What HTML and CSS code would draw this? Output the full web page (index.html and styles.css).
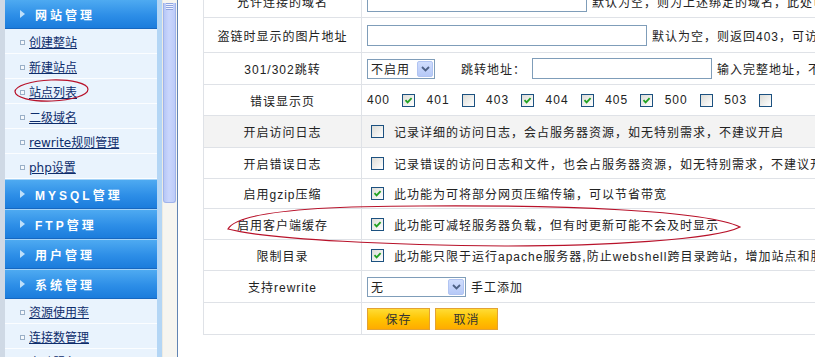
FILE: index.html
```html
<!DOCTYPE html>
<html lang="zh-CN">
<head>
<meta charset="utf-8">
<title>站点设置</title>
<link rel="stylesheet" href="styles.css">
</head>
<body>
<div class="page">
  <aside class="left">
    <nav class="menu">
      <div class="hd first"><i class="tri"></i><span>网站管理</span></div>
      <a class="it" href="#"><i class="bl"></i><span>创建整站</span></a>
      <a class="it" href="#"><i class="bl"></i><span>新建站点</span></a>
      <a class="it" href="#"><i class="bl"></i><span>站点列表</span></a>
      <a class="it" href="#"><i class="bl"></i><span>二级域名</span></a>
      <a class="it" href="#"><i class="bl"></i><span>rewrite规则管理</span></a>
      <a class="it" href="#"><i class="bl"></i><span>php设置</span></a>
      <div class="hd"><i class="tri"></i><span>MYSQL管理</span></div>
      <div class="hd"><i class="tri"></i><span>FTP管理</span></div>
      <div class="hd"><i class="tri"></i><span>用户管理</span></div>
      <div class="hd"><i class="tri"></i><span>系统管理</span></div>
      <a class="it" href="#"><i class="bl"></i><span>资源使用率</span></a>
      <a class="it" href="#"><i class="bl"></i><span>连接数管理</span></a>
      <a class="it" href="#"><i class="bl"></i><span>自动服务</span></a>
    </nav>
    <div class="sb"><div class="thumb"><i class="grip"></i></div></div>
  </aside>

  <main class="main">
    <div class="tbl">
      <div class="row h32">
        <div class="lab">允许连接的域名</div>
        <div class="val"><input class="txt w220" type="text"><span class="tip">默认为空，则为上述绑定的域名，此处可设置多个</span></div>
      </div>
      <div class="row h35">
        <div class="lab">盗链时显示的图片地址</div>
        <div class="val"><input class="txt w280" type="text"><span class="tip">默认为空，则返回403，可访问图片地址</span></div>
      </div>
      <div class="row h32">
        <div class="lab">301/302跳转</div>
        <div class="val">
          <span class="sel w68"><span class="sel-t">不启用</span><span class="sel-btn"><svg width="9" height="6" viewBox="0 0 9 6"><path d="M1 1 L4.5 4.5 L8 1" fill="none" stroke="#4d6185" stroke-width="1.8"/></svg></span></span>
          <span class="jump">跳转地址：</span>
          <input class="txt w180" type="text"><span class="tip">输入完整地址，不含http://</span>
        </div>
      </div>
      <div class="row h31">
        <div class="lab">错误显示页</div>
        <div class="val">
          <span class="code">400</span><span class="cb ck on"><svg width="11" height="11" viewBox="0 0 11 11"><path d="M2.5 5.2 L4.6 7.4 L8.6 3.2" fill="none" stroke="#21a121" stroke-width="1.8"/></svg></span>
          <span class="code">401</span><span class="cb ck"></span>
          <span class="code">403</span><span class="cb ck on"><svg width="11" height="11" viewBox="0 0 11 11"><path d="M2.5 5.2 L4.6 7.4 L8.6 3.2" fill="none" stroke="#21a121" stroke-width="1.8"/></svg></span>
          <span class="code">404</span><span class="cb ck on"><svg width="11" height="11" viewBox="0 0 11 11"><path d="M2.5 5.2 L4.6 7.4 L8.6 3.2" fill="none" stroke="#21a121" stroke-width="1.8"/></svg></span>
          <span class="code">405</span><span class="cb ck on"><svg width="11" height="11" viewBox="0 0 11 11"><path d="M2.5 5.2 L4.6 7.4 L8.6 3.2" fill="none" stroke="#21a121" stroke-width="1.8"/></svg></span>
          <span class="code">500</span><span class="cb ck"></span>
          <span class="code">503</span><span class="cb ck"></span>
        </div>
      </div>
      <div class="row h32 gray">
        <div class="lab">开启访问日志</div>
        <div class="val"><span class="cb opt"></span><span>记录详细的访问日志，会占服务器资源，如无特别需求，不建议开启</span></div>
      </div>
      <div class="row h31">
        <div class="lab">开启错误日志</div>
        <div class="val"><span class="cb opt"></span><span>记录错误的访问日志和文件，也会占服务器资源，如无特别需求，不建议开启</span></div>
      </div>
      <div class="row h30">
        <div class="lab">启用gzip压缩</div>
        <div class="val"><span class="cb opt"><svg width="11" height="11" viewBox="0 0 11 11"><path d="M2.5 5.2 L4.6 7.4 L8.6 3.2" fill="none" stroke="#21a121" stroke-width="1.8"/></svg></span><span>此功能为可将部分网页压缩传输，可以节省带宽</span></div>
      </div>
      <div class="row h31">
        <div class="lab">启用客户端缓存</div>
        <div class="val"><span class="cb opt"><svg width="11" height="11" viewBox="0 0 11 11"><path d="M2.5 5.2 L4.6 7.4 L8.6 3.2" fill="none" stroke="#21a121" stroke-width="1.8"/></svg></span><span>此功能可减轻服务器负载，但有时更新可能不会及时显示</span></div>
      </div>
      <div class="row h31">
        <div class="lab">限制目录</div>
        <div class="val"><span class="cb opt"><svg width="11" height="11" viewBox="0 0 11 11"><path d="M2.5 5.2 L4.6 7.4 L8.6 3.2" fill="none" stroke="#21a121" stroke-width="1.8"/></svg></span><span>此功能只限于运行apache服务器,防止webshell跨目录跨站，增加站点和服务器安全</span></div>
      </div>
      <div class="row h32">
        <div class="lab">支持rewrite</div>
        <div class="val">
          <span class="sel w99"><span class="sel-t">无</span><span class="sel-btn"><svg width="9" height="6" viewBox="0 0 9 6"><path d="M1 1 L4.5 4.5 L8 1" fill="none" stroke="#4d6185" stroke-width="1.8"/></svg></span></span>
          <span class="tip">手工添加</span>
        </div>
      </div>
      <div class="row h32">
        <div class="lab"></div>
        <div class="val"><button class="btn" type="button">保存</button><button class="btn" type="button">取消</button></div>
      </div>
    </div>
  </main>

  <svg class="marks" width="815" height="357" viewBox="0 0 815 357">
    <ellipse cx="51.5" cy="90.5" rx="36.5" ry="10.5" transform="rotate(-2 51.5 90.5)" fill="none" stroke="#b8122a" stroke-width="1.2"/>
    <path d="M228 229 C236 214 300 206 420 206 C560 205 705 210 740 227 C715 240 600 246 505 246 C400 245 270 240 228 229 Z" fill="none" stroke="#b8122a" stroke-width="1.2"/>
  </svg>
</div>
</body>
</html>
```

FILE: styles.css
```css
* { box-sizing: border-box; margin: 0; padding: 0; }
html, body { width: 815px; height: 357px; overflow: hidden; background: #fff; }
body { font: 12px "Liberation Sans", "Noto Sans CJK SC", sans-serif; color: #222; }

.page { display: flex; height: 357px; position: relative; }

/* ---------- left frame ---------- */
.left { display: flex; width: 178px; flex: none; border-right: 1px solid #6184b3; height: 357px; }
.menu {
  width: 162px; height: 357px; overflow: hidden;
  border-left: 5px solid #cfd9e5; border-right: 5px solid #b4d6f5;
  background: #e9f3fd;
  display: flex; flex-direction: column;
}
.hd {
  flex: none; height: 30px; display: flex; align-items: center; padding-left: 15px;
  border-top: 1px solid #a3d2f8; border-bottom: 1px solid #1667c0;
  background: linear-gradient(#4eaaf1, #2d8ee7 55%, #1b7cdc);
  color: #fff; font-weight: bold; letter-spacing: 3px;
}
.hd.first { height: 29px; border-top: 0; }
.tri {
  width: 0; height: 0; margin-right: 10px;
  border-left: 5px solid #bfe0fb; border-top: 4px solid transparent; border-bottom: 4px solid transparent;
}
.it {
  flex: none; height: 25px; display: flex; align-items: center; padding-left: 15px;
  border-bottom: 1px solid #fbfdff; color: #0e2d6c; text-decoration: none;
  font-family: "DejaVu Sans", "Noto Sans CJK SC", sans-serif; font-size: 12px;
}
.it span { text-decoration: underline; }
.bl { width: 5px; height: 5px; margin: 3px 4px 0 0; border: 1px solid #9ab0c8; background: #f6f9fd; flex: none; }

.sb { width: 15px; height: 357px; background: #f6f5f0; border-left: 1px solid #eceae2; }
.thumb {
  width: 13px; height: 200px;
  background: linear-gradient(to right, #b7c7f6, #c9d6fd 45%, #bccbf8);
  border: 1px solid #9fb3ea; border-top: 0; border-radius: 0 0 3px 3px;
}
.grip { display: block; width: 7px; height: 7px; margin: 3px auto 0;
  background: repeating-linear-gradient(#8ea4de 0 1px, #eef2ff 1px 2px); }

/* ---------- main ---------- */
.main { flex: 1; padding-left: 25px; overflow: hidden; }
.tbl { margin-top: -14px; width: 820px; border-left: 1px solid #dfe2e7; }
.row { display: grid; grid-template-columns: 158px 1fr; border-bottom: 1px solid #dfe2e7; background: #fff; }
.row.gray { background: #f3f3f3; }
.h30 { height: 30px; } .h31 { height: 31px; } .h32 { height: 32px; } .h35 { height: 35px; }
.lab { display: flex; align-items: center; justify-content: center; border-right: 1px solid #dfe2e7; letter-spacing: 1px; white-space: nowrap; }
.val { display: flex; align-items: center; padding-left: 5px; white-space: nowrap; letter-spacing: 1px; overflow: hidden; }

.txt { height: 21px; border: 1px solid #7f9db9; background: #fff; flex: none; outline: none; }
.w220 { width: 220px; } .w280 { width: 280px; } .w180 { width: 180px; }
.tip { margin-left: 5px; }

.sel { display: inline-flex; align-items: center; justify-content: space-between; height: 20px; flex: none;
  border: 1px solid #7f9db9; background: #fff; padding-left: 3px; }
.w68 { width: 68px; } .w99 { width: 99px; }
.sel-btn { width: 16px; height: 16px; margin-right: 1px; display: flex; align-items: center; justify-content: center;
  background: linear-gradient(#d0ddfd, #b6c9f7); border: 1px solid #b1c4f2; border-radius: 2px; }
.jump { margin-left: 26px; margin-right: 6px; }

.cb { display: inline-flex; align-items: center; justify-content: center; width: 13px; height: 13px; flex: none;
  border: 1px solid #1c5180; background: linear-gradient(135deg, #dcdcd7, #fff); }
.ck { margin: 0 11.5px 0 12px; }
.opt { margin: 0 10px 0 4px; }

.btn { width: 63px; height: 22px; margin-right: 5px; display: inline-flex; align-items: center; justify-content: center;
  border: 1px solid #e3a233; background: linear-gradient(#ffdc35, #ffc400 50%, #ffab00);
  font: 12px "Liberation Sans", "Noto Sans CJK SC", sans-serif; letter-spacing: 1px; color: #333; }

.marks { position: absolute; left: 0; top: 0; pointer-events: none; }
```
